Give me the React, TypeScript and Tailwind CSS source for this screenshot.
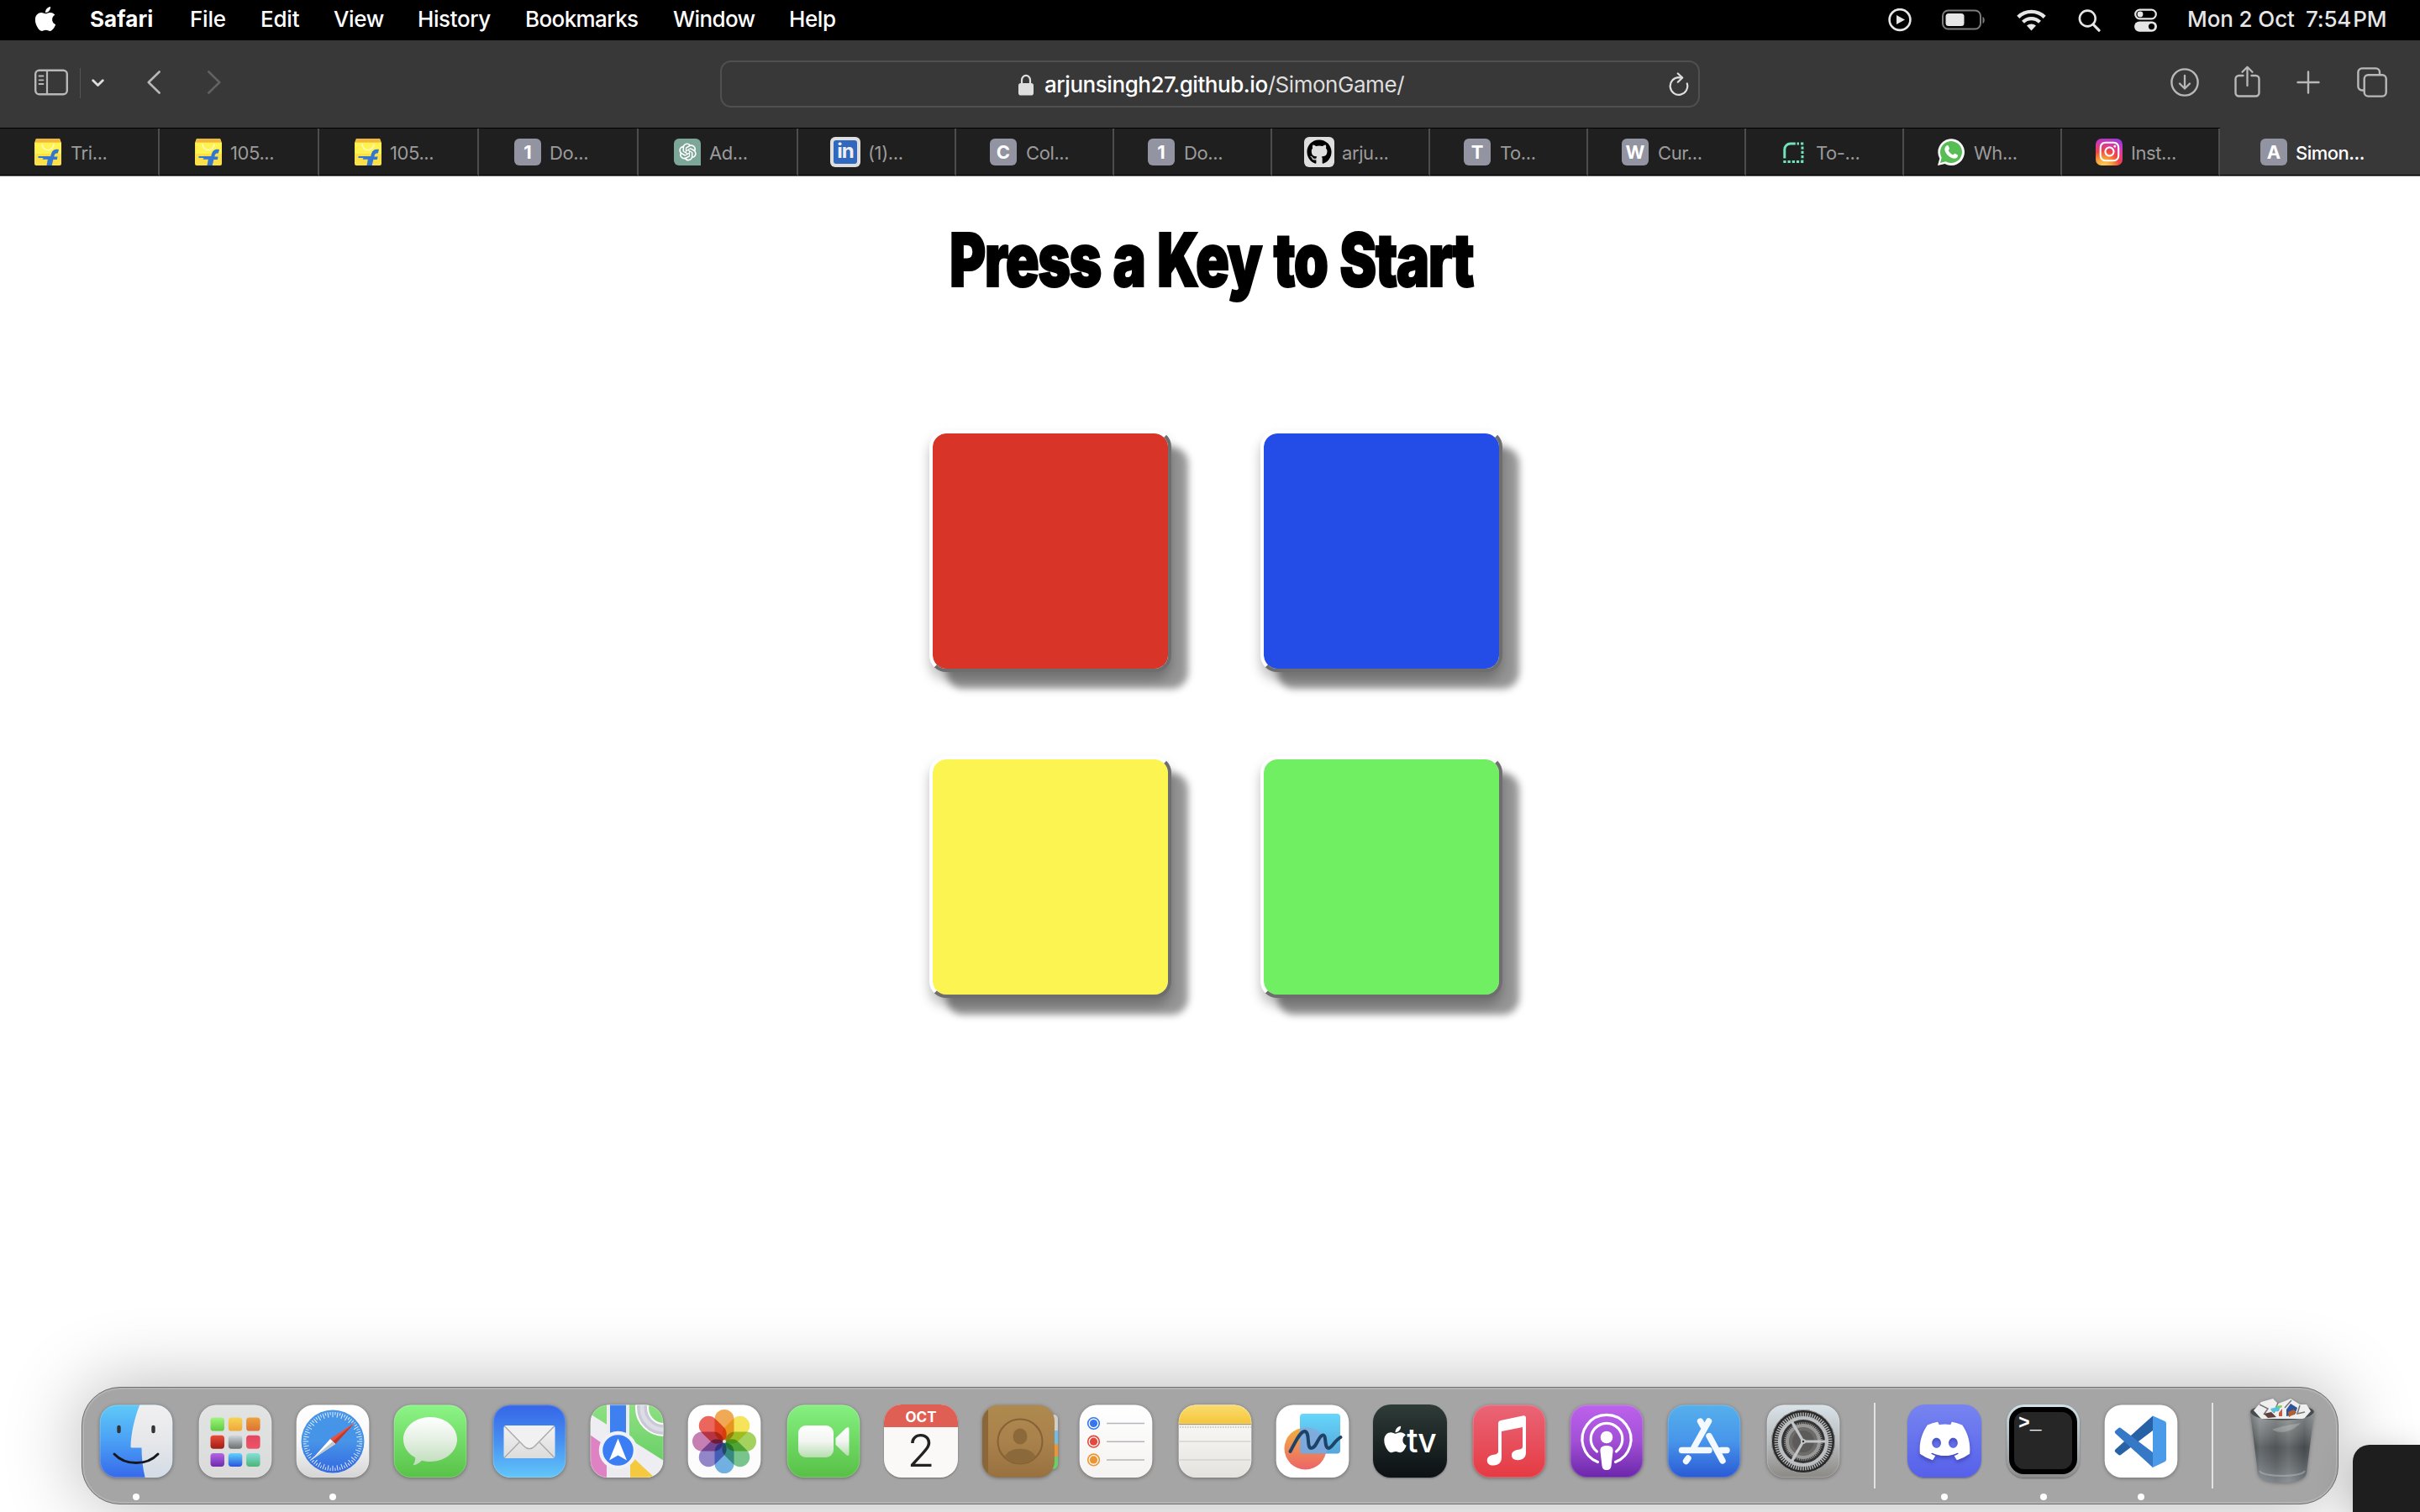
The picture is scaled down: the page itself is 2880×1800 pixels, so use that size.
import type { ReactNode } from "react";
import { FaApple, FaGithub, FaInstagram, FaWhatsapp, FaDiscord } from "react-icons/fa";
import { AiOutlineOpenAI } from "react-icons/ai";

/* ---------- Menu bar ---------- */

const menus = [
  { label: "Safari", cls: "w-[119px] font-bold tracking-[0.1px]" },
  { label: "File", cls: "w-[84px] font-medium tracking-[-0.2px]" },
  { label: "Edit", cls: "w-[87px] font-medium tracking-[-0.2px]" },
  { label: "View", cls: "w-[100px] font-medium tracking-[-0.4px]" },
  { label: "History", cls: "w-[128px] font-medium tracking-[-0.4px]" },
  { label: "Bookmarks", cls: "w-[176px] font-medium tracking-[-0.6px]" },
  { label: "Window", cls: "w-[138px] font-medium tracking-[-0.6px]" },
  { label: "Help", cls: "w-[70px] font-medium tracking-[-0.4px]" },
];

function MenuBar() {
  return (
    <header className="flex h-12 items-center bg-black text-[26px] leading-none text-white">
      <div className="flex w-[107px] items-center pl-[39px]">
        <FaApple className="mb-1 h-[33px] w-[30px]" />
      </div>
      {menus.map((m) => (
        <span key={m.label} className={`mb-0.5 whitespace-nowrap ${m.cls}`}>
          {m.label}
        </span>
      ))}
      <div className="ml-auto flex items-center pr-[39px] text-[#e6e6e6]">
        <svg className="mr-9 h-7 w-7" viewBox="0 0 28 28">
          <circle cx="14" cy="13.5" r="12.4" fill="none" stroke="currentColor" strokeWidth="2.6" />
          <path d="M10 8v11l10-5.5z" fill="currentColor" />
        </svg>
        <svg className="mr-[37px] h-[26px] w-[52px]" viewBox="0 0 52 26">
          <rect x="1" y="1.5" width="45" height="22" rx="6.5" fill="none" stroke="#7c7c7c" strokeWidth="2" />
          <rect x="4.5" y="5" width="22" height="15" rx="3.5" fill="currentColor" />
          <path d="M48.5 9v8c3-1 3-7 0-8z" fill="#7c7c7c" />
        </svg>
        <svg className="mr-[38px] h-[26px] w-[35px]" viewBox="0 0 35 26">
          <path d="M1.8 9.3a22.5 22.5 0 0 1 31.4 0" fill="none" stroke="currentColor" strokeWidth="4.4" />
          <path d="M7.5 15.2a14.3 14.3 0 0 1 20 0" fill="none" stroke="currentColor" strokeWidth="4.2" />
          <path d="M12 19.6a8 8 0 0 1 11 0L17.5 25.4z" fill="currentColor" />
        </svg>
        <svg className="mr-[40px] h-[27px] w-[27px]" viewBox="0 0 27 27">
          <circle cx="11.3" cy="11" r="9.4" fill="none" stroke="currentColor" strokeWidth="2.6" />
          <path d="M18 18l7 7.2" stroke="currentColor" strokeWidth="3.2" strokeLinecap="round" />
        </svg>
        <svg className="mr-[36px] h-[28px] w-[27px]" viewBox="0 0 27 28">
          <rect x="1.2" y="1.7" width="24.6" height="10.6" rx="5.3" fill="none" stroke="currentColor" strokeWidth="2.2" />
          <circle cx="7" cy="7" r="3.4" fill="currentColor" />
          <rect x="0" y="15.5" width="27" height="12.2" rx="6.1" fill="currentColor" />
          <circle cx="20.5" cy="21.6" r="3.6" fill="#000" />
        </svg>
        <span className="mb-0.5 w-[141px] whitespace-nowrap font-medium tracking-[-0.1px]">Mon 2 Oct</span>
        <span className="mb-0.5 w-[97px] whitespace-nowrap font-medium tracking-[-0.2px]">7:54&#8202;PM</span>
      </div>
    </header>
  );
}

/* ---------- Toolbar ---------- */

function Toolbar() {
  return (
    <div className="flex h-[105px] items-center border-b border-black bg-[#383838] text-[#b8b8b8]">
      <svg className="mt-[-5px] ml-[41px] h-8 w-10" viewBox="0 0 40 32">
        <rect x="1.2" y="1.7" width="37.6" height="28.6" rx="4.5" fill="none" stroke="currentColor" strokeWidth="2.4" />
        <path d="M15 2v28" stroke="currentColor" strokeWidth="2.2" />
        <path d="M5.5 8.5h5M5.5 13.3h5M5.5 18h5" stroke="currentColor" strokeWidth="1.8" strokeLinecap="round" />
      </svg>
      <div className="mt-[-3px] ml-[14px] h-9 w-px bg-[#555]" />
      <svg className="mt-[-2px] ml-[13px] h-[10px] w-[15px]" viewBox="0 0 15 10">
        <path d="M1.7 1.8l5.8 5.8 5.8-5.8" fill="none" stroke="#dedede" strokeWidth="2.8" strokeLinecap="round" strokeLinejoin="round" />
      </svg>
      <svg className="mt-[-5px] ml-[51px] h-7 w-4" viewBox="0 0 16 28">
        <path d="M14.6 1.5L1.8 14l12.8 12.5" fill="none" stroke="#b8b8b8" strokeWidth="2.6" strokeLinecap="round" strokeLinejoin="round" />
      </svg>
      <svg className="mt-[-5px] ml-[56px] h-7 w-4" viewBox="0 0 16 28">
        <path d="M1.4 1.5L14.2 14 1.4 26.5" fill="none" stroke="#626262" strokeWidth="2.6" strokeLinecap="round" strokeLinejoin="round" />
      </svg>
      <div className="ml-[594px] flex h-[56px] w-[1166px] items-center rounded-[13px] border-2 border-[#505050] pr-[11px]">
        <svg className="mt-[2px] ml-[353px] h-[26px] w-[18px]" viewBox="0 0 18 26">
          <path d="M4 12V7.5a5 5.6 0 0 1 10 0V12" fill="none" stroke="#dedede" strokeWidth="2.2" />
          <rect x="0" y="11" width="18" height="14.5" rx="2.8" fill="#dedede" />
        </svg>
        <div className="mt-px ml-[13px] whitespace-nowrap text-[26px] leading-none tracking-[-0.45px] text-[#dedede]">
          <span className="font-medium text-white">arjunsingh27.github.io</span>/SimonGame/
        </div>
        <svg className="ml-auto h-[28px] w-[24px]" viewBox="0 0 24 28">
          <path d="M21.8 13.5A10.3 10.3 0 1 1 12 6.2l3.5 .3" fill="none" stroke="#dedede" strokeWidth="2.2" strokeLinecap="round" />
          <path d="M10.8 1.5l5.4 5-5.4 5.2" fill="none" stroke="#dedede" strokeWidth="2.2" strokeLinecap="round" strokeLinejoin="round" />
        </svg>
      </div>
      <svg className="mt-[-4px] ml-auto h-[34px] w-[34px]" viewBox="0 0 34 34">
        <circle cx="17" cy="17" r="15.6" fill="none" stroke="currentColor" strokeWidth="2.4" />
        <path d="M17 9v15M11 18.5l6 6 6-6" fill="none" stroke="currentColor" strokeWidth="2.3" strokeLinecap="round" strokeLinejoin="round" />
      </svg>
      <svg className="mt-[-7px] ml-[42px] h-[38px] w-[31px]" viewBox="0 0 31 38">
        <path d="M10.5 12H5.5a4 4 0 0 0-4 4v16.5a4 4 0 0 0 4 4h20a4 4 0 0 0 4-4V16a4 4 0 0 0-4-4h-5" fill="none" stroke="currentColor" strokeWidth="2.4" strokeLinecap="round" />
        <path d="M15.5 24V2M9.5 7.8l6-6 6 6" fill="none" stroke="currentColor" strokeWidth="2.3" strokeLinecap="round" strokeLinejoin="round" />
      </svg>
      <svg className="mt-[-5px] ml-[43px] h-[28px] w-[28px]" viewBox="0 0 28 28">
        <path d="M14 1.5v25M1.5 14h25" stroke="currentColor" strokeWidth="2.4" strokeLinecap="round" />
      </svg>
      <svg className="mt-[-5px] mr-[39px] ml-[44px] h-[36px] w-[36px]" viewBox="0 0 36 36">
        <path d="M8.5 27.5H6a4.6 4.6 0 0 1-4.6-4.6V6A4.6 4.6 0 0 1 6 1.4h16.5A4.6 4.6 0 0 1 27 6v3" fill="none" stroke="currentColor" strokeWidth="2.4" />
        <rect x="8.7" y="9.2" width="26" height="25.4" rx="4.6" fill="none" stroke="currentColor" strokeWidth="2.4" />
      </svg>
    </div>
  );
}

/* ---------- Tabs ---------- */

function Flipkart() {
  return (
    <svg className="h-8 w-8" viewBox="0 0 32 32">
      <path d="M2 0h28l2 5v25a2 2 0 0 1-2 2H2a2 2 0 0 1-2-2V5z" fill="#fbe04a" />
      <rect x="1" y="5" width="31" height="13" fill="#fff34f" />
      <path d="M2 0h28l1 4.5H1z" fill="#f0b73a" />
      <path d="M9 6.5a7 7 0 0 0 14 0" fill="none" stroke="#fff8c8" strokeWidth="1.6" />
      <path d="M29 13c-5-1-8 1-9 5l-.8 3H4.5v2h6l-1 1.8h6.3L14.5 32h6.2l1.7-7h4.4l.8-3.4h-4.2c.4-3 1.5-4.5 4.5-4z" fill="#3577cf" />
    </svg>
  );
}

function Letter({ children }: { children: string }) {
  return (
    <span className="flex h-8 w-8 items-center justify-center rounded-md bg-[#9394a1] text-[22px] font-bold leading-none text-white">
      {children}
    </span>
  );
}

const tabs: { w: string; icon: ReactNode; text: string; pad: string; gap: string }[] = [
  { w: "w-[190px]", pad: "pl-[41px]", gap: "gap-[11px]", icon: <Flipkart />, text: "Tri..." },
  { w: "w-[190px]", pad: "pl-[42px]", gap: "gap-[10px]", icon: <Flipkart />, text: "105..." },
  { w: "w-[190px]", pad: "pl-[42px]", gap: "gap-[10px]", icon: <Flipkart />, text: "105..." },
  { w: "w-[190px]", pad: "pl-[42px]", gap: "gap-[10px]", icon: <Letter>1</Letter>, text: "Do..." },
  {
    w: "w-[190px]", pad: "pl-[42px]", gap: "gap-[10px]", text: "Ad...",
    icon: (
      <span className="flex h-8 w-8 items-center justify-center rounded-md rounded-br-none bg-[#7ba698]">
        <AiOutlineOpenAI className="h-[27px] w-[27px] text-white" />
      </span>
    ),
  },
  {
    w: "w-[188px]", pad: "pl-[38px]", gap: "gap-[9px]", text: "(1)...",
    icon: (
      <span className="flex h-9 w-9 items-center justify-center rounded-md bg-[#dedede]">
        <span className="flex h-7 w-7 items-center justify-center rounded-[3px] bg-[#2f68bd] pb-0.5 text-[24px] font-bold leading-none tracking-[-1px] text-[#eee]">
          in
        </span>
      </span>
    ),
  },
  { w: "w-[188px]", pad: "pl-[40px]", gap: "gap-[11px]", icon: <Letter>C</Letter>, text: "Col..." },
  { w: "w-[188px]", pad: "pl-[40px]", gap: "gap-[11px]", icon: <Letter>1</Letter>, text: "Do..." },
  {
    w: "w-[188px]", pad: "pl-[38px]", gap: "gap-[9px]", text: "arju...",
    icon: (
      <span className="flex h-9 w-9 items-center justify-center rounded-md bg-[#dedede]">
        <FaGithub className="h-[30px] w-[30px] text-black" />
      </span>
    ),
  },
  { w: "w-[188px]", pad: "pl-[40px]", gap: "gap-[11px]", icon: <Letter>T</Letter>, text: "To..." },
  { w: "w-[188px]", pad: "pl-[40px]", gap: "gap-[11px]", icon: <Letter>W</Letter>, text: "Cur..." },
  {
    w: "w-[188px]", pad: "pl-[40px]", gap: "gap-[11px]", text: "To-...",
    icon: (
      <svg className="h-8 w-8" viewBox="0 0 32 32">
        <path d="M5.8 23.5V13a7 7 0 0 1 7-7h6" fill="none" stroke="#6fe3bb" strokeWidth="3" />
        <path d="M20.5 6h2.500M25 6h3.300M27 9.500v16M4.300 27.500h24" fill="none" stroke="#6fe3bb" strokeWidth="3" strokeDasharray="3.3 1.9" />
      </svg>
    ),
  },
  {
    w: "w-[188px]", pad: "pl-[40px]", gap: "gap-[11px]", text: "Wh...",
    icon: (
      <span className="flex h-8 w-8 items-center justify-center">
        <svg className="h-8 w-8" viewBox="0 0 32 32">
          <path d="M0 32l2.3-8.2A15.8 15.8 0 1 1 8.5 30z" fill="#fff" />
          <path d="M3 29l1.7-6.5A13 13 0 1 1 9.5 27.300z" fill="#57bd55" />
          <path d="M10.5 8.500c1.500-.8 2-.4 2.500.8l1 2.500c.3.800-1.500 1.800-1.200 2.500 1.300 2.400 3 4 5.400 5 .8.300 1.500-1.800 2.300-1.500l3 1.500c.8.500.5 1.800 0 2.700-1.200 2-4 2-6.200 1.200-4-1.500-7-4.500-8.500-8-.9-2.300-.5-5.500 1.700-6.700z" fill="#fff" />
        </svg>
      </span>
    ),
  },
  {
    w: "w-[188px]", pad: "pl-[40px]", gap: "gap-[10px]", text: "Inst...",
    icon: (
      <span className="flex h-8 w-8 items-center justify-center rounded-[7px] bg-[radial-gradient(circle_at_30%_105%,#fbd55a_0%,#f8a13a_25%,#ee4444_48%,#d737ab_70%,#6f3cf5_105%)]">
        <FaInstagram className="h-[27px] w-[27px] text-white" />
      </span>
    ),
  },
];

function TabBar() {
  return (
    <div className="flex h-[57px] border-b border-b-[#777] bg-[#1f1f1f] text-[22px] font-normal leading-none text-[#9b9b9b]">
      {tabs.map((t, i) => (
        <div key={i} className={`flex shrink-0 items-center border-r-2 border-b border-r-[#4d4d4d] border-b-black ${t.w} ${t.pad} ${t.gap}`}>
          {t.icon}
          <span className="mt-0.5 whitespace-nowrap tracking-[-0.4px]">{t.text}</span>
        </div>
      ))}
      <div className="mt-[-1px] flex flex-1 items-center gap-[10px] border-b border-b-black bg-[#383838] pt-px pl-12 font-medium text-white">
        <Letter>A</Letter>
        <span className="mt-0.5 whitespace-nowrap tracking-[-0.5px]">Simon...</span>
      </div>
    </div>
  );
}

/* ---------- Game ---------- */

const tileBase =
  "h-72 w-72 rounded-[20px] border-4 border-t-white border-l-white border-r-[#6e6e6e] border-b-[#6e6e6e] bg-clip-padding shadow-[0_9px_14px_rgba(0,0,0,0.26),20px_20px_9px_rgba(0,0,0,0.41)]";

function Game() {
  return (
    <main className="flex flex-1 flex-col items-center">
      <h1 className="mt-[55px] flex h-[88px] w-[700px] items-center justify-center">
        <span className="ml-[3px] scale-x-[0.75] whitespace-nowrap text-[88px] font-black leading-none tracking-[-2px] text-black [word-spacing:4px] [-webkit-text-stroke:2px_black]">
          Press a Key to Start
        </span>
      </h1>
      <div className="mt-[159px] ml-[14px] grid grid-cols-[288px_288px] gap-x-[106px] gap-y-[100px]">
        <button className={`${tileBase} bg-[#d83427]`} />
        <button className={`${tileBase} bg-[#244de7]`} />
        <button className={`${tileBase} bg-[#fcf451]`} />
        <button className={`${tileBase} bg-[#70ef62]`} />
      </div>
    </main>
  );
}

/* ---------- Dock ---------- */

function Gradient({ id, stops }: { id: string; stops: string[] }) {
  return (
    <linearGradient id={id} x1="0" y1="0" x2="0" y2="1">
      {stops.map((c, i) => (
        <stop key={i} offset={i / (stops.length - 1)} stopColor={c} />
      ))}
    </linearGradient>
  );
}

function Squircle({ id, stops, children }: { id: string; stops: string[]; children?: ReactNode }) {
  return (
    <svg className="h-[88px] w-[88px] drop-shadow-[0_1px_2px_rgba(0,0,0,0.35)]" viewBox="0 0 88 88">
      <defs>
        <Gradient id={`${id}-bg`} stops={stops} />
        <clipPath id={`${id}-clip`}>
          <rect x=".7" y=".5" width="86.6" height="86.6" rx="20.5" />
        </clipPath>
      </defs>
      <g clipPath={`url(#${id}-clip)`}>
        <rect width="88" height="88" fill={`url(#${id}-bg)`} />
        {children}
      </g>
      <rect x="1.2" y="1" width="85.6" height="85.6" rx="20" fill="none" stroke="#fff" strokeOpacity=".2" />
    </svg>
  );
}

const range = (n: number) => Array.from({ length: n }, (_, i) => i);

const finder = (
  <Squircle id="finder" stops={["#5fcaf8", "#4a9ff5", "#3668ea"]}>
    <defs><Gradient id="finder-r" stops={["#f0f0f1", "#e6e7ea", "#d2dbe6"]} /></defs>
    <path d="M48.5 0C42 16 38 34 37.5 50a1.5 1.5 0 0 0 1.5 1.5h11.5c0 12 1.5 25 4.5 37H88V0z" fill="url(#finder-r)" />
    <path d="M23.5 27v5M64.5 27v5" stroke="#333" strokeWidth="4.4" strokeLinecap="round" />
    <path d="M18 59c13 14 39 14 52 0" fill="none" stroke="#16181c" strokeWidth="3" strokeLinecap="round" />
  </Squircle>
);

const padColors = [
  ["#a0f57c", "#5dcb42"], ["#f6d454", "#efa83a"], ["#eda23c", "#dc7233"],
  ["#ea4c3a", "#a11d14"], ["#d0d9de", "#6c6e70"], ["#e84561", "#ea5566"],
  ["#b565e6", "#6e2bac"], ["#5ed4fc", "#2a54dd"], ["#84e0dc", "#4bb575"],
];
const launchpad = (
  <Squircle id="pad" stops={["#e2e4e4", "#dadada"]}>
    {padColors.map((c, i) => (
      <g key={i}>
        <defs><Gradient id={`pad${i}`} stops={c} /></defs>
        <rect x={14.5 + (i % 3) * 21.3} y={15.5 + Math.floor(i / 3) * 21.2} width="16.5" height="16" rx="3.6" fill={`url(#pad${i})`} />
      </g>
    ))}
  </Squircle>
);

const safari = (
  <Squircle id="safari" stops={["#ffffff", "#f8f8f8", "#d4d4d4"]}>
    <defs><Gradient id="saf" stops={["#4795e8", "#4694e8", "#3468e0"]} /></defs>
    <circle cx="44" cy="44" r="37.5" fill="url(#saf)" />
    {range(72).map((i) => (
      <path key={i} d={i % 2 ? "M44 8.8v3.6" : "M44 8.8v6.4"} stroke="#fff" strokeOpacity=".85" strokeWidth="1" transform={`rotate(${i * 5} 44 44)`} />
    ))}
    <path d="M70.5 21.5L41 41l6.2 6z" fill="#ee4f43" />
    <path d="M70.5 21.5L44 44l3.2 3z" fill="#b93a2e" />
    <path d="M18.5 66L41 41l6.2 6z" fill="#fff" />
    <path d="M18.5 66L44 44l3.2 3z" fill="#c3c7cc" />
  </Squircle>
);

const messages = (
  <Squircle id="msg" stops={["#8cf587", "#57c147"]}>
    <defs><Gradient id="msg-b" stops={["#ffffff", "#e3efe1", "#bfdcba"]} /></defs>
    <path d="M44 15c18 0 32 12 32 26.500S62 68 44 68c-3.500 0-7-.4-10-1.300-3 3-6.500 5-10.500 5.600 2-3 2.800-6 2.600-9C17.500 58.500 12 50.500 12 41.500 12 27 26 15 44 15z" fill="url(#msg-b)" />
  </Squircle>
);

const mail = (
  <Squircle id="mail" stops={["#3565e8", "#4790f0", "#63c8fa"]}>
    <defs><Gradient id="mail-b" stops={["#f2f2f2", "#dcdcdc"]} /></defs>
    <rect x="13.5" y="25" width="61" height="39" rx="3" fill="url(#mail-b)" />
    <path d="M14.5 63L32 45M73.5 63L56 45" stroke="#a9a9a9" strokeWidth="1.3" />
    <path d="M14.5 26l23 23.5c4 4.300 9 4.300 13 0L73.500 26" fill="#f1f1f1" stroke="#aaa" strokeWidth="1.4" />
  </Squircle>
);

const maps = (
  <Squircle id="maps" stops={["#8ee082", "#5fcb5e"]}>
    <path d="M0 11l88 56v21H0z" fill="#eeeef2" />
    <path d="M0 36l20 14v38H0z" fill="#df82c4" />
    <path d="M48 60l30 28H48z" fill="#f4c93f" />
    <path d="M20 0h27v88H20z" fill="#ececf0" />
    <path d="M24 0h19v40H24z" fill="#3f80f0" />
    <circle cx="88" cy="4" r="26" fill="none" stroke="#fff" strokeWidth="16" />
    <circle cx="88" cy="4" r="26" fill="none" stroke="#c9cad6" strokeWidth="12" />
    <circle cx="88" cy="4" r="26" fill="none" stroke="#dcdce6" strokeWidth="5" />
    <circle cx="33.5" cy="54.5" r="20.5" fill="#3b7df2" stroke="#f0f1f5" strokeWidth="4.5" />
    <path d="M33.5 40.5l10.5 26-10.5-6-10.5 6z" fill="#fff" />
  </Squircle>
);

const petals = ["#f09a37", "#f4e03c", "#95cc44", "#62bd7a", "#5aa5e0", "#8273c2", "#bd6aa8", "#e94b40"];
const photos = (
  <Squircle id="photos" stops={["#ffffff", "#fbfbfb"]}>
    {petals.map((c, i) => (
      <rect key={i} x="32.5" y="6" width="23" height="37" rx="11.5" fill={c} fillOpacity=".85" className="mix-blend-multiply" transform={`rotate(${i * 45} 44 44)`} />
    ))}
    <circle cx="44" cy="44" r="2" fill="#e8e8e8" />
  </Squircle>
);

const facetime = (
  <Squircle id="ft" stops={["#86f182", "#57bf45"]}>
    <defs><Gradient id="ft-b" stops={["#ffffff", "#f2f5f1", "#b7deb0"]} /></defs>
    <rect x="14" y="25" width="42" height="38" rx="9" fill="url(#ft-b)" />
    <path d="M58.5 40L71 28c2-1.500 3.500-1 3.500 1v30c0 2-1.500 2.500-3.500 1L58.500 48z" fill="url(#ft-b)" />
  </Squircle>
);

const calendar = (
  <div className="flex h-[87px] w-[88px] flex-col items-center overflow-hidden rounded-[21px] bg-[#faf9f8] shadow-[0_1px_2px_rgba(0,0,0,0.35)]">
    <div className="flex h-[27px] w-full items-center justify-center bg-[#e05f54] pt-1 text-[17px] font-bold leading-none text-white">OCT</div>
    <div className="mt-[1px] text-[54px] font-light leading-none text-[#222]">2</div>
  </div>
);

const contacts = (
  <svg className="h-[88px] w-[92px] drop-shadow-[0_1px_2px_rgba(0,0,0,0.35)]" viewBox="0 0 92 88">
    <defs><Gradient id="con" stops={["#ae8a4e", "#a9814c", "#98713f"]} /></defs>
    <path d="M80 12h6a5 5 0 0 1 5 5v14H80z" fill="#d0cec8" />
    <path d="M80 31h11v16H80z" fill="#6fbde8" />
    <path d="M80 47h11v15H80z" fill="#ee9430" />
    <path d="M80 62h11v9a6 6 0 0 1-6 6h-5z" fill="#69cf66" />
    <rect x="1" y=".8" width="86" height="86" rx="19" fill="url(#con)" />
    <path d="M8 6v76a19 19 0 0 1-7-14V20A19 19 0 0 1 8 6z" fill="#8a6638" />
    <g stroke="#856235" strokeWidth="2">
      <circle cx="46" cy="44" r="26.5" fill="none" />
      <ellipse cx="46" cy="38" rx="8.5" ry="9.5" fill="#8c693a" stroke="none" />
      <path d="M27.5 62.5c5-13 32-13 37 0-9 10.500-28 10.500-37 0z" fill="#8c693a" stroke="none" />
    </g>
  </svg>
);

const reminders = (
  <Squircle id="rem" stops={["#ffffff", "#f4f3f1"]}>
    {["#3376f0", "#e2493c", "#ea9632"].map((c, i) => (
      <g key={c}>
        <circle cx="17.5" cy={22.5 + i * 21.7} r="6.8" fill="none" stroke={c} strokeWidth="1.6" />
        <circle cx="17.5" cy={22.5 + i * 21.7} r="4.6" fill={c} />
        <path d={`M33 ${22.5 + i * 21.7}h45`} stroke="#b5b5bb" strokeWidth="1.5" />
      </g>
    ))}
  </Squircle>
);

const notes = (
  <Squircle id="notes" stops={["#fbfbfa", "#f2f1ee", "#e3e2dd"]}>
    <defs><Gradient id="notes-y" stops={["#f9dd70", "#f6c63c"]} /></defs>
    <rect width="88" height="22.5" fill="url(#notes-y)" />
    <path d="M0 23.5h88" stroke="#b09a5c" strokeWidth="1.5" />
    <path d="M2 27h86" stroke="#bdbdbd" strokeWidth="1.5" strokeDasharray="1.5 1.5" />
    <path d="M0 44h88M0 66h88" stroke="#d4d4d4" strokeWidth="1.5" />
  </Squircle>
);

const freeform = (
  <Squircle id="free" stops={["#ffffff", "#ffffff"]}>
    <defs>
      <Gradient id="free-o" stops={["#f0b03f", "#f08a56", "#ec6468"]} />
      <Gradient id="free-b" stops={["#66d7fb", "#57a6da"]} />
    </defs>
    <circle cx="35.5" cy="52.5" r="25" fill="url(#free-o)" />
    <rect x="29" y="11" width="48" height="47.5" rx="4" fill="url(#free-b)" />
    <path d="M29 28.3A25 25 0 0 1 60.500 58.500H33a4 4 0 0 1-4-4z" fill="#8aa6d8" fillOpacity=".75" />
    <path d="M17.5 56C24 44 29 32.500 34.500 32c7 0 2 20 8 20 6.500 0 8.500-15.500 14-15.500 4.500 0 1 15 6.500 15.500 4 0 8-10 14.500-13" fill="none" stroke="#1d4468" strokeWidth="4" strokeLinecap="round" />
  </Squircle>
);

const tv = (
  <div className="flex h-[87px] w-[88px] items-center justify-center rounded-[21px] bg-linear-to-b from-[#2f3c38] to-[#0c1114] text-white shadow-[0_1px_2px_rgba(0,0,0,0.35)]">
    <FaApple className="mb-1 h-[37px] w-[27px]" />
    <span className="mt-[-3px] text-[39px] font-medium leading-none tracking-[-1px]">tv</span>
  </div>
);

const music = (
  <Squircle id="music" stops={["#ea6577", "#e53a42"]}>
    <path d="M31 22.500c0-2 1-3 3-3.500l26-5.500c2.500-.5 4 .2 4 2.500V57c0 6-3.500 9-9.500 9.300-4.500.2-7.500-2-7.500-5.700 0-4.200 3-6 8-6.800 4-.7 5-1.500 5-4.300V27L35 32v31c0 6-3.500 9.300-9.500 9.500-4.500.2-7.700-2-7.700-5.800 0-4 3-6.200 8-7 4-.7 5.200-1.500 5.200-4.200z" fill="#fff" />
  </Squircle>
);

const podcasts = (
  <Squircle id="pod" stops={["#bd62ec", "#a24fd6", "#6a26a8"]}>
    <g fill="none" stroke="#fff" strokeWidth="3.2" strokeLinecap="round">
      <path d="M33.5 68.5A29 29 0 1 1 54.5 68.5" />
      <path d="M32.5 56a18.8 18.8 0 1 1 23 0" />
    </g>
    <circle cx="44" cy="39" r="7.3" fill="#fff" />
    <path d="M44 49c5.500 0 8 2 7.500 7l-2 17c-.5 4-2.500 5-5.500 5s-5-1-5.500-5l-2-17c-.5-5 2-7 7.500-7z" fill="#fff" />
  </Squircle>
);

const appStore = (
  <Squircle id="app" stops={["#56b0ec", "#4795ea", "#2a58d4"]}>
    <g stroke="#f4f8ff" strokeWidth="7.4" strokeLinecap="round">
      <path d="M49.5 20L32 51M39.500 20l3 5.500" />
      <path d="M50 37.500L66 67" />
      <path d="M17.500 54.500H50M64 54.500h7" />
      <path d="M25 64l-2.500 3.500" />
    </g>
  </Squircle>
);

const settings = (
  <Squircle id="set" stops={["#d9e3e9", "#b9bdbe", "#8b8884"]}>
    <circle cx="44" cy="44" r="38" fill="#2a2a2a" />
    {range(72).map((i) => (
      <path key={i} d="M44 9.500v6" stroke="#b4b6b7" strokeWidth="1.5" transform={`rotate(${i * 5} 44 44)`} />
    ))}
    <circle cx="44" cy="44" r="37.6" fill="none" stroke="#b9bdbf" strokeWidth=".8" />
    <circle cx="44" cy="44" r="28" fill="#333" stroke="#bcbfc1" strokeWidth="4.2" />
    <circle cx="44" cy="44" r="19" fill="#6d6c6a" stroke="#989896" strokeWidth="4" />
    {range(60).map((i) => (
      <path key={i} d="M44 21v3" stroke="#999" strokeWidth="1" transform={`rotate(${i * 6} 44 44)`} />
    ))}
    <circle cx="44" cy="44" r="13" fill="#5c5b59" />
    {[0, 120, 240].map((a) => (
      <path key={a} d="M44 44h27" stroke="#c3c6c8" strokeWidth="3.2" transform={`rotate(${a} 44 44)`} />
    ))}
    <circle cx="44" cy="44" r="3" fill="#c3c6c8" />
    <circle cx="44" cy="44" r="1.2" fill="#333" />
  </Squircle>
);

const discord = (
  <div className="flex h-[87px] w-[88px] items-center justify-center rounded-[21px] bg-linear-to-b from-[#7784f0] to-[#5660ea] shadow-[0_1px_2px_rgba(0,0,0,0.35)]">
    <FaDiscord className="h-[65px] w-[65px] text-white drop-shadow-[0_3px_2px_rgba(40,40,140,0.5)]" />
  </div>
);

const terminal = (
  <div className="h-[87px] w-[87px] rounded-[21px] bg-linear-to-b from-[#cfe2ea] to-[#8c8c8c] p-[3px] shadow-[0_1px_2px_rgba(0,0,0,0.4)]">
    <div className="h-[80px] w-[81px] rounded-[18px] border-[6px] border-black bg-[#262626] pt-[3px] pl-[5px] font-['Liberation_Mono'] text-[23px] font-bold leading-[22px] text-white">
      &gt;_
    </div>
  </div>
);

const vscode = (
  <Squircle id="vs" stops={["#ffffff", "#ffffff"]}>
    <path d="M58 13.5L13.5 53.500c-1 1-1 2.300 0 3.300l3.500 3c1 1 2.200 1 3.200 0L58 31z" fill="#2862a6" />
    <path d="M58 75L13.500 34.500c-1-1-1-2.300 0-3.300l3.500-3c1-1 2.200-1 3.200 0L60 58.500z" fill="#3478c6" />
    <path d="M58 13.500l14 6.300c1.300.7 2 1.500 2 3v42.400c0 1.500-.7 2.300-2 3L58 75z" fill="#4a9aea" />
  </Squircle>
);

const trash = (
  <svg className="mt-[-8px] h-[102px] w-[78px] drop-shadow-[0_1px_2px_rgba(0,0,0,0.3)]" viewBox="0 0 78 102">
    <defs>
      <linearGradient id="bin" x1="0" x2="1" y1="0" y2="0">
        <stop offset="0" stopColor="#565c60" />
        <stop offset=".15" stopColor="#858b8f" />
        <stop offset=".4" stopColor="#6c7072" />
        <stop offset=".6" stopColor="#85898b" />
        <stop offset=".85" stopColor="#5d6366" />
        <stop offset="1" stopColor="#787e82" />
      </linearGradient>
      <Gradient id="bin-shade" stops={["#ffffff33", "#00000040", "#9aa4ac60"]} />
    </defs>
    <ellipse cx="39" cy="17" rx="38" ry="9.5" fill="#474c50" />
    <path d="M5 15l9-10 14-4 6 6 8-3 7-3 11 7 8 0 5 8-8 9H14z" fill="#efefef" />
    <path d="M12 8l10 5-5 7M34 6l-5 12M42 12l8-9M60 9l-3 10 9-2" fill="none" stroke="#777" strokeWidth="1.5" />
    <path d="M25 13l12-3-2 6-8 1z" fill="#56c2e0" />
    <path d="M30 10l9-1-1 3z" fill="#7ccf4e" />
    <path d="M44 14l5-7 8 5-3 8-10 2z" fill="#2f529c" />
    <path d="M46 17l7-3 3 4-9 5z" fill="#b5602c" />
    <path d="M35 18l4-5v9h-4z" fill="#c65a3d" />
    <path d="M17 19l9-2 6 6-10 1z" fill="#60403c" />
    <path d="M1 17c5 8 20 10 38 10s33-2 38-10l-9 72c-1 8-12 12-29 12s-28-4-29-12z" fill="url(#bin)" />
    <path d="M1 17c5 8 20 10 38 10s33-2 38-10l-9 72c-1 8-12 12-29 12s-28-4-29-12z" fill="url(#bin-shade)" />
    <path d="M27 38c12 6 24 2 34-8-10 2-22 3-34 8z" fill="#fff" fillOpacity=".22" />
    <path d="M12 87c4 8 50 8 54 0" fill="none" stroke="#b5bcc2" strokeOpacity=".5" strokeWidth="2" />
  </svg>
);

const dockItems: { icon: ReactNode; w: string; dot?: boolean }[] = [
  { icon: finder, w: "w-[118px]", dot: true },
  { icon: launchpad, w: "w-[116px]" },
  { icon: safari, w: "w-[116px]", dot: true },
  { icon: messages, w: "w-[118px]" },
  { icon: mail, w: "w-[116px]" },
  { icon: maps, w: "w-[116px]" },
  { icon: photos, w: "w-[118px]" },
  { icon: facetime, w: "w-[116px]" },
  { icon: calendar, w: "w-[116px]" },
  { icon: contacts, w: "w-[116px]" },
  { icon: reminders, w: "w-[118px]" },
  { icon: notes, w: "w-[116px]" },
  { icon: freeform, w: "w-[116px]" },
  { icon: tv, w: "w-[118px]" },
  { icon: music, w: "w-[116px]" },
  { icon: podcasts, w: "w-[116px]" },
  { icon: appStore, w: "w-[118px]" },
  { icon: settings, w: "w-[128px]" },
];

function DockItem({ icon, w, dot }: { icon: ReactNode; w: string; dot?: boolean }) {
  return (
    <div className={`shrink-0 ${w}`}>
      <div className="h-[88px]">{icon}</div>
      {dot && <div className="mt-[18px] ml-10 h-2 w-2 rounded-full bg-white" />}
    </div>
  );
}

function Dock() {
  return (
    <footer className="relative flex h-[149px]">
      <div className="ml-[97px] flex h-[140px] w-[2686px] rounded-[46px] border border-[#6f6f6f] bg-[#a5a5a5] pt-5 pl-5 shadow-[inset_0_0_0_2px_#b3b3b3,0_0_90px_rgba(0,0,0,0.29)]">
        {dockItems.map((d, i) => (
          <DockItem key={i} {...d} />
        ))}
        <div className="mt-[-2px] mr-[38px] h-[102px] w-0.5 bg-[#e2e2e2]" />
        <DockItem icon={discord} w="w-[118px]" dot />
        <DockItem icon={terminal} w="w-[116px]" dot />
        <DockItem icon={vscode} w="w-[128px]" dot />
        <div className="mt-[-2px] mr-[43px] h-[102px] w-0.5 bg-[#e2e2e2]" />
        {trash}
      </div>
      <div className="absolute right-0 bottom-0 h-20 w-20 rounded-tl-[20px] bg-[#1e1e1e] shadow-[0_10px_40px_rgba(0,0,0,0.25)]" />
    </footer>
  );
}

export default function App() {
  return (
    <div className="flex h-[1800px] w-[2880px] flex-col overflow-hidden bg-white font-['Inter','Liberation_Sans',sans-serif]">
      <MenuBar />
      <Toolbar />
      <TabBar />
      <Game />
      <Dock />
    </div>
  );
}
